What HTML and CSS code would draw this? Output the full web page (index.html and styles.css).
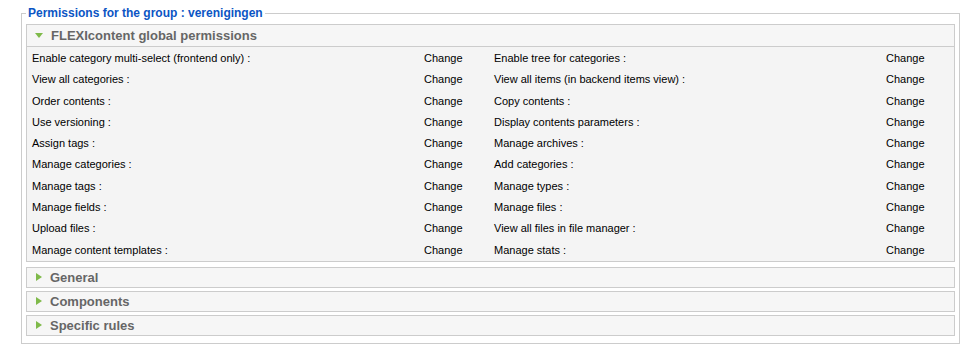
FILE: index.html
```html
<!DOCTYPE html>
<html lang="en">
<head>
    <meta charset="UTF-8">
    <title>Permissions for the group</title>
    <link rel="stylesheet" href="styles.css">
</head>
<body>
    <fieldset class="perms">
        <legend>Permissions for the group : verenigingen</legend>

        <div class="pane open">
            <h3 class="pane-title"><span class="arrow down"></span>FLEXIcontent global permissions</h3>
            <div class="pane-body">
                <div class="perm-grid">
                    <span>Enable category multi-select (frontend only) :</span><a href="#">Change</a>
                    <span>Enable tree for categories :</span><a href="#">Change</a>
                    <span>View all categories :</span><a href="#">Change</a>
                    <span>View all items (in backend items view) :</span><a href="#">Change</a>
                    <span>Order contents :</span><a href="#">Change</a>
                    <span>Copy contents :</span><a href="#">Change</a>
                    <span>Use versioning :</span><a href="#">Change</a>
                    <span>Display contents parameters :</span><a href="#">Change</a>
                    <span>Assign tags :</span><a href="#">Change</a>
                    <span>Manage archives :</span><a href="#">Change</a>
                    <span>Manage categories :</span><a href="#">Change</a>
                    <span>Add categories :</span><a href="#">Change</a>
                    <span>Manage tags :</span><a href="#">Change</a>
                    <span>Manage types :</span><a href="#">Change</a>
                    <span>Manage fields :</span><a href="#">Change</a>
                    <span>Manage files :</span><a href="#">Change</a>
                    <span>Upload files :</span><a href="#">Change</a>
                    <span>View all files in file manager :</span><a href="#">Change</a>
                    <span>Manage content templates :</span><a href="#">Change</a>
                    <span>Manage stats :</span><a href="#">Change</a>
                </div>
            </div>
        </div>

        <div class="pane">
            <h3 class="pane-title"><span class="arrow right"></span>General</h3>
        </div>
        <div class="pane">
            <h3 class="pane-title"><span class="arrow right"></span>Components</h3>
        </div>
        <div class="pane">
            <h3 class="pane-title"><span class="arrow right"></span>Specific rules</h3>
        </div>
    </fieldset>
</body>
</html>
```

FILE: styles.css
```css
/* Base */
body {
    margin: 0;
    padding: 0;
    font-family: 'Liberation Sans', Arial, sans-serif;
    font-size: 11px;
    color: #000;
    background: #fff;
}

/* Outer fieldset */
.perms {
    box-sizing: border-box;
    width: 939px;
    margin: 6px 0 0 21px;
    padding: 3px 4px 7px 4px;
    border: 1px solid #ccc;
}
.perms legend {
    padding: 0 2px;
    margin-left: 0;
    font-size: 12px;
    font-weight: bold;
    color: #0b55c4;
    line-height: 15px;
}

/* Panes */
.pane {
    border: 1px solid #ccc;
    background: #f6f6f6;
    margin-bottom: 3px;
}
.pane.open { margin-bottom: 5px; }
.pane:last-child { margin-bottom: 0; }
.pane-title {
    margin: 0;
    height: 19px;
    line-height: 19px;
    padding-left: 8px;
    font-size: 13px;
    font-weight: bold;
    color: #666;
    display: flex;
    align-items: center;
}
.pane.open .pane-title {
    height: 21px;
    line-height: 21px;
    border-bottom: 1px solid #ccc;
}
.pane-body {
    padding: 1px 0 0 0;
    background: #f4f4f4;
}

/* Arrows */
.arrow {
    display: inline-block;
    width: 0;
    height: 0;
    margin-right: 8px;
}
.arrow.down {
    border-left: 4px solid transparent;
    border-right: 4px solid transparent;
    border-top: 5px solid #7fba4a;
}
.arrow.right {
    border-top: 4px solid transparent;
    border-bottom: 4px solid transparent;
    border-left: 6px solid #7fba4a;
    margin-left: 1px;
    margin-right: 8px;
}

/* Permission grid */
.perm-grid {
    display: grid;
    grid-template-columns: 392px 70px 392px 1fr;
}
.perm-grid span,
.perm-grid a {
    padding-left: 5px;
    height: 21.3px;
    line-height: 21.3px;
    white-space: nowrap;
}
.perm-grid a {
    color: #000;
    text-decoration: none;
}
```
